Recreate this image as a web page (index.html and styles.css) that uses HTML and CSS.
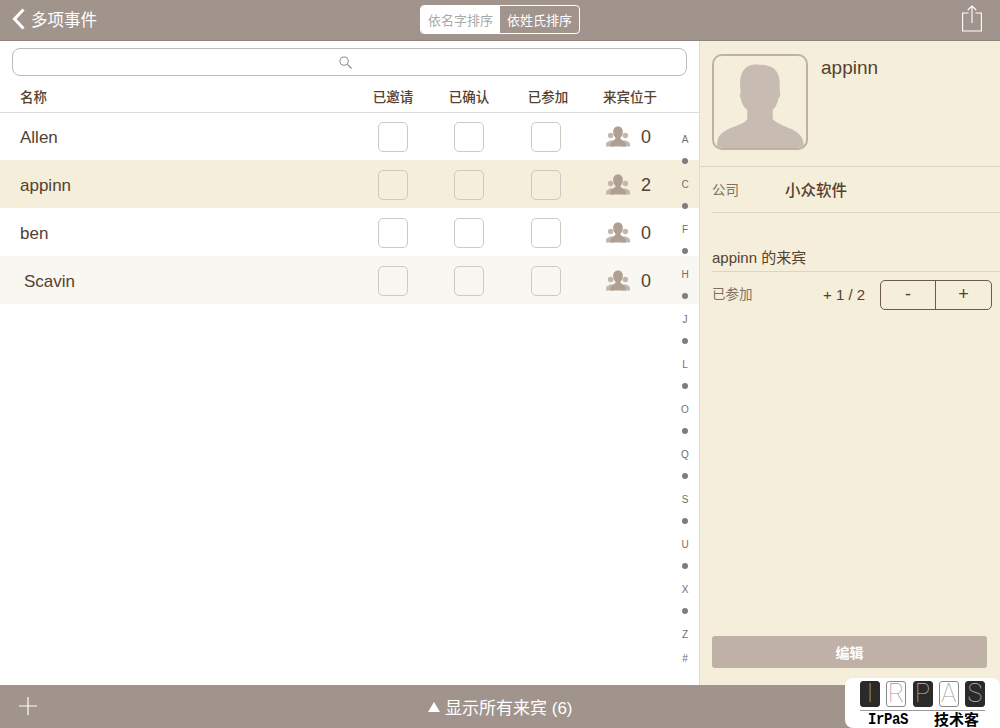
FILE: index.html
```html
<!DOCTYPE html>
<html lang="zh-CN">
<head>
    <meta charset="UTF-8">
    <meta name="viewport" content="width=device-width, initial-scale=1.0">
    <title>多项事件</title>
    <link rel="stylesheet" href="styles.css">
</head>
<body>

<div class="app">
    <!-- Top bar -->
    <header class="topbar">
        <div class="back">
            <svg class="back-icon" width="14" height="22" viewBox="0 0 14 22"><path d="M11.5 1.5 L2.5 11 L11.5 20.5" fill="none" stroke="#fff" stroke-width="3"/></svg>
            <span>多项事件</span>
        </div>
        <div class="segment">
            <span class="segment-item active">依名字排序</span>
            <span class="segment-item">依姓氏排序</span>
        </div>
        <svg class="share-icon" width="20" height="27" viewBox="0 0 20 27"><path d="M6.5 8 H0.6 V26 H19.4 V8 H13.5 M10 18 V1 M5.8 5 L10 1 L14.2 5" fill="none" stroke="#fff" stroke-width="1.1"/></svg>
    </header>

    <div class="main">
        <!-- Guest list -->
        <section class="list-panel">
            <div class="search-box">
                <svg width="13" height="13" viewBox="0 0 14 14"><circle cx="5.5" cy="5.5" r="4.5" fill="none" stroke="#8e8e8e" stroke-width="1.1"/><path d="M9 9 L13.5 13.5" stroke="#8e8e8e" stroke-width="1.3"/></svg>
            </div>
            <div class="row-grid list-head">
                <span class="head-name">名称</span>
                <span>已邀请</span>
                <span>已确认</span>
                <span class="head-shift">已参加</span>
                <span class="head-guests">来宾位于</span>
            </div>

            <div class="row-grid row">
                <span class="name">Allen</span>
                <i class="check"></i><i class="check"></i><i class="check"></i>
                <div class="guests">
                    <svg class="people" width="24" height="22" viewBox="0 0 24 22"><use href="#people"/></svg>
                    <span>0</span>
                </div>
            </div>
            <div class="row-grid row selected">
                <span class="name">appinn</span>
                <i class="check"></i><i class="check"></i><i class="check"></i>
                <div class="guests">
                    <svg class="people" width="24" height="22" viewBox="0 0 24 22"><use href="#people"/></svg>
                    <span>2</span>
                </div>
            </div>
            <div class="row-grid row">
                <span class="name">ben</span>
                <i class="check"></i><i class="check"></i><i class="check"></i>
                <div class="guests">
                    <svg class="people" width="24" height="22" viewBox="0 0 24 22"><use href="#people"/></svg>
                    <span>0</span>
                </div>
            </div>
            <div class="row-grid row alt">
                <span class="name name-indent">Scavin</span>
                <i class="check"></i><i class="check"></i><i class="check"></i>
                <div class="guests">
                    <svg class="people" width="24" height="22" viewBox="0 0 24 22"><use href="#people"/></svg>
                    <span>0</span>
                </div>
            </div>

            <!-- Alphabet index sits over the rows -->
            <div class="alpha-index">
                <span>A</span><b></b><span>C</span><b></b><span>F</span><b></b><span>H</span><b></b>
                <span>J</span><b></b><span>L</span><b></b><span>O</span><b></b><span>Q</span><b></b>
                <span>S</span><b></b><span>U</span><b></b><span>X</span><b></b><span>Z</span>
                <span>#</span>
            </div>
        </section>

        <!-- Detail panel -->
        <aside class="detail-panel">
            <div class="profile">
                <div class="avatar">
                    <svg width="92" height="92" viewBox="0 0 94 94"><path d="M3 94 C3 84 5 80 12 76 C20 72 30 70 34 65 V55 C30 53 28 47 27 42 C25 42 28 36 27 34 C25 20 30 10 40 9 C44 8 54 9 58 11 C66 14 68 24 67 34 C68 38 68 42 66 43 C65 48 63 53 60 55 V64 C63 69 74 72 82 76 C89 80 92 85 92 94 Z" fill="#c8bcb2"/></svg>
                </div>
                <div class="profile-name">appinn</div>
            </div>
            <div class="company">
                <span class="field-label">公司</span>
                <span class="company-name">小众软件</span>
            </div>
            <div class="guests-title">appinn 的来宾</div>
            <div class="attend">
                <span class="field-label">已参加</span>
                <span class="attend-count">+ 1 / 2</span>
                <div class="stepper">
                    <span>-</span>
                    <span>+</span>
                </div>
            </div>
            <button class="edit-btn">编辑</button>
        </aside>
    </div>

    <!-- Bottom bar -->
    <footer class="bottombar">
        <svg class="plus-icon" width="18" height="18" viewBox="0 0 18 18"><path d="M9 0 V18 M0 9 H18" stroke="#fff" stroke-width="1.2"/></svg>
        <div class="show-all"><i class="triangle"></i>显示所有来宾 (6)</div>
    </footer>

    <!-- Watermark over the corner -->
    <div class="watermark">
        <div class="wm-tiles">
            <span class="tile dark">I</span>
            <span class="tile">R</span>
            <span class="tile dark">P</span>
            <span class="tile">A</span>
            <span class="tile dark">S</span>
        </div>
        <div class="wm-text">
            <span class="wm-latin">IrPaS</span>
            <span>技术客</span>
        </div>
    </div>
</div>

<svg class="icon-defs" width="0" height="0">
    <defs>
        <g id="people">
            <circle cx="4.6" cy="9.5" r="2.7" fill="#c4b6ab"/>
            <circle cx="19.4" cy="9.5" r="2.7" fill="#c4b6ab"/>
            <path d="M0 20.5 V18 C0 16 2.5 15.5 4 14.5 H6.5 L8 20.5 Z M24 20.5 V18 C24 16 21.5 15.5 20 14.5 H17.5 L16 20.5 Z" fill="#c4b6ab"/>
            <path d="M12 0.5 C15.4 0.5 17 3 16.8 6.5 C16.7 9 15.6 10.8 14.6 11.6 V13 C16.2 14.5 20 15 20 20.5 H4 C4 15 7.8 14.5 9.4 13 V11.6 C8.4 10.8 7.3 9 7.2 6.5 C7 3 8.6 0.5 12 0.5 Z" fill="#b0a094"/>
        </g>
    </defs>
</svg>

</body>
</html>
```

FILE: styles.css
```css
* {
    box-sizing: border-box;
}

body {
    font-family: "Liberation Sans", "Noto Sans CJK SC", sans-serif;
    background-color: #fff;
    color: #54412f;
    margin: 0;
    padding: 0;
    overflow: hidden;
}

.app {
    width: 1000px;
    height: 728px;
    display: flex;
    flex-direction: column;
    position: relative;
    overflow: hidden;
}

.icon-defs {
    position: absolute;
}

/* Top bar */
.topbar {
    height: 41px;
    flex: none;
    background-color: #a0948d;
    border-bottom: 1px solid #8f837c;
    display: grid;
    grid-template-columns: 408px 160px 1fr;
    align-items: center;
    padding: 0 18px 2px 12px;
    color: #fff;
}

.back {
    display: flex;
    align-items: center;
    gap: 5px;
    font-size: 16.5px;
}

.segment {
    display: flex;
    height: 29px;
    border: 1px solid #fff;
    border-radius: 4px;
    overflow: hidden;
    font-size: 13px;
    margin-top: 1px;
}

.segment-item {
    flex: 1;
    display: flex;
    align-items: center;
    justify-content: center;
}

.segment-item.active {
    background-color: #fff;
    color: #a9a9a9;
}

.share-icon {
    justify-self: end;
    margin-top: -2px;
}

/* Main area */
.main {
    flex: 1;
    display: flex;
    min-height: 0;
}

.list-panel {
    width: 700px;
    flex: none;
    position: relative;
    border-right: 1px solid #e4dccb;
    padding-top: 7px;
}

.search-box {
    height: 28px;
    margin: 0 12px 0 12px;
    border: 1.5px solid #bcbab8;
    border-radius: 8px;
    display: flex;
    align-items: center;
    justify-content: center;
    padding-right: 8px;
}

.row-grid {
    display: grid;
    grid-template-columns: 355px 76px 76px 78px 1fr;
    align-items: center;
    justify-items: center;
}

.list-head {
    height: 37px;
    margin-bottom: -1px;
    border-bottom: 1px solid #dcdcdc;
    font-size: 13.5px;
    font-weight: 500;
    padding-top: 3px;
}

.head-name {
    justify-self: start;
    padding-left: 20px;
}

.head-shift {
    padding-left: 4px;
}

.head-guests {
    justify-self: start;
    padding-left: 18px;
}

.row {
    height: 48px;
    padding-top: 2px;
    font-size: 17px;
}

.row.selected {
    background-color: #f5eeda;
}

.row.alt {
    background-color: #f9f7f2;
}

.name {
    justify-self: start;
    padding: 1px 0 0 20px;
}

.name-indent {
    padding-left: 24px;
}

.check {
    display: block;
    width: 30px;
    height: 30px;
    border: 1.5px solid #cfc9c2;
    border-radius: 5px;
}

.guests {
    justify-self: start;
    display: flex;
    align-items: center;
    gap: 11px;
    padding-left: 21px;
    font-size: 18px;
}

/* Alphabet index */
.alpha-index {
    position: absolute;
    top: 87px;
    left: 674px;
    width: 22px;
    display: flex;
    flex-direction: column;
    align-items: center;
    font-size: 10px;
    color: #6f6f6f;
}

.alpha-index span {
    height: 24px;
    line-height: 24px;
}

.alpha-index b {
    display: block;
    width: 6px;
    height: 6px;
    margin: 6px 0 9px;
    border-radius: 50%;
    background-color: #7d7d7d;
}

/* Detail panel */
.detail-panel {
    flex: 1;
    background-color: #f5eeda;
    display: flex;
    flex-direction: column;
}

.profile {
    height: 126px;
    border-bottom: 1px solid #dcd5c4;
    display: flex;
    padding: 13px 0 0 12px;
    flex: none;
}

.avatar {
    width: 96px;
    height: 96px;
    border: 2px solid #bdb2a4;
    border-radius: 10px;
    overflow: hidden;
}

.avatar svg {
    display: block;
}

.profile-name {
    font-size: 19px;
    margin: 3px 0 0 13px;
}

.company {
    margin-left: 12px;
    height: 46px;
    border-bottom: 1px solid #dcd5c4;
    display: flex;
    align-items: center;
    flex: none;
    padding-bottom: 2px;
}

.field-label {
    font-size: 13.5px;
    color: #7d7264;
    width: 73px;
}

.company-name {
    font-size: 15.5px;
    font-weight: 500;
}

.guests-title {
    margin: 31px 0 0 12px;
    height: 28px;
    border-bottom: 1px solid #dcd5c4;
    font-size: 15px;
    line-height: 28px;
}

.attend {
    display: flex;
    align-items: center;
    padding-left: 12px;
    height: 45px;
}

.attend .field-label {
    width: 111px;
    margin-top: -3px;
}

.attend-count {
    font-size: 15px;
    width: 57px;
}

.stepper {
    display: grid;
    grid-template-columns: 54px 1fr;
    width: 112px;
    height: 30px;
    border: 1.5px solid #6c5a4a;
    border-radius: 5px;
    font-size: 18px;
}

.stepper span {
    display: flex;
    align-items: center;
    justify-content: center;
}

.stepper span + span {
    border-left: 1.5px solid #6c5a4a;
}

.edit-btn {
    margin: auto 13px 17px 12px;
    height: 32px;
    flex: none;
    border: none;
    border-radius: 3px;
    background-color: #bfb1a6;
    color: #fff;
    font-family: inherit;
    font-size: 14px;
    font-weight: bold;
}

/* Bottom bar */
.bottombar {
    height: 43px;
    flex: none;
    background-color: #a0948d;
    color: #fff;
    display: flex;
    align-items: center;
    position: relative;
    padding: 0 0 2px 19px;
}

.show-all {
    position: absolute;
    left: 428px;
    top: 9px;
    font-size: 17px;
    white-space: nowrap;
    display: flex;
    align-items: center;
}

.triangle {
    width: 0;
    height: 0;
    margin-right: 5px;
    border-left: 6px solid transparent;
    border-right: 6px solid transparent;
    border-bottom: 10px solid #fff;
}

/* Watermark */
.watermark {
    position: absolute;
    left: 845px;
    top: 678px;
    width: 155px;
    height: 50px;
    background-color: #fff;
    border-radius: 8px 8px 0 8px;
    padding: 3px 15px 0 15px;
}

.wm-tiles {
    display: flex;
    justify-content: space-between;
    border-bottom: 1px solid #999;
    padding-bottom: 3px;
}

.tile {
    width: 20px;
    height: 26px;
    border: 1px solid #888;
    border-radius: 3px;
    background-color: #fff;
    color: #999;
    font-family: Roboto, sans-serif;
    font-weight: 100;
    font-size: 25px;
    line-height: 24px;
    text-align: center;
}

.tile.dark {
    background-color: #2a2a2a;
    border-color: #2a2a2a;
    color: #bbb;
}

.wm-text {
    display: flex;
    justify-content: space-between;
    align-items: center;
    padding: 1px 6px 0 8px;
    color: #000;
    font-size: 15px;
    line-height: 15px;
    font-weight: bold;
}

.wm-latin {
    font-family: "Liberation Mono", monospace;
    font-size: 14px;
    letter-spacing: -0.4px;
    transform: scaleY(1.2);
}
```
